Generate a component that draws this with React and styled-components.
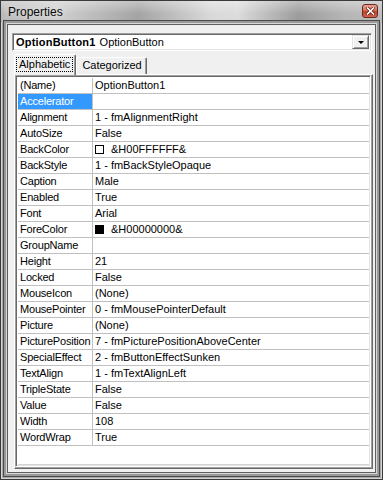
import React from "react";
import styled, { createGlobalStyle } from "styled-components";

const GlobalStyle = createGlobalStyle`
  html, body {
    margin: 0;
    padding: 0;
    background: #ffffff;
  }
  body {
    font-family: "Liberation Sans", Arial, sans-serif;
  }
`;

const Window = styled.div`
  box-sizing: border-box;
  width: 383px;
  height: 480px;
  display: flex;
  flex-direction: column;
  border: 1px solid #3a3a3a;
  background: #a9a9a9;
  box-shadow: inset 0 0 0 1px #d4d4d4;
`;

const TitleBar = styled.div`
  height: 22px;
  flex: none;
  display: flex;
  align-items: center;
  padding: 0 4px 0 7px;
  background:
    linear-gradient(180deg, rgba(255, 255, 255, 0.35) 0%, rgba(255, 255, 255, 0) 60%),
    linear-gradient(
      90deg,
      #b9b9b9 0%,
      #cfcfcf 15%,
      #a4a4a4 36%,
      #d9d9d9 55%,
      #dcdcdc 62%,
      #9c9c9c 78%,
      #b5b5b5 90%,
      #bdbdbd 100%
    );
`;

const Title = styled.span`
  flex: 1;
  font-size: 12px;
  color: #0a0a0a;
  text-shadow: 0 0 6px rgba(255, 255, 255, 0.8);
`;

const CloseButton = styled.div`
  width: 16px;
  height: 14px;
  box-sizing: border-box;
  border: 1px solid #6b2a20;
  border-radius: 3px;
  background: linear-gradient(180deg, #e9a294 0%, #d5705c 45%, #c0402a 55%, #d2644c 100%);
  display: flex;
  align-items: center;
  justify-content: center;
  margin-bottom: 2px;
`;

const Client = styled.div`
  flex: 1;
  display: flex;
  flex-direction: column;
  margin: 1px 6px 6px 6px;
  background: #f0f0f0;
  border: 1px solid #5f5f5f;
  box-shadow: 0 0 0 1px #d8d8d8, 0 0 0 3px #9a9a9a, 0 0 0 4px #4a4a4a;
`;

const Combo = styled.div`
  height: 18px;
  box-sizing: border-box;
  margin: 8px 3px 0 4px;
  display: flex;
  align-items: center;
  background: #ffffff;
  border-top: 1px solid #a0a0a0;
  border-left: 1px solid #a0a0a0;
  border-right: 1px solid #ffffff;
  border-bottom: 1px solid #ffffff;
  box-shadow: inset 1px 1px 0 #696969, inset -1px -1px 0 #e3e3e3;
  padding: 0 2px 0 3px;
  font-size: 11px;
  color: #000000;
`;

const ComboText = styled.span`
  flex: 1;
  white-space: nowrap;
  b {
    font-weight: bold;
    letter-spacing: 0.2px;
    margin-right: 4px;
  }
`;

const DropButton = styled.div`
  width: 17px;
  height: 14px;
  box-sizing: border-box;
  background: #f0f0f0;
  border-top: 1px solid #e3e3e3;
  border-left: 1px solid #e3e3e3;
  border-right: 1px solid #696969;
  border-bottom: 1px solid #696969;
  box-shadow: inset 1px 1px 0 #ffffff, inset -1px -1px 0 #a0a0a0;
  display: flex;
  align-items: center;
  justify-content: center;
`;

const Arrow = styled.div`
  width: 0;
  height: 0;
  border-left: 3px solid transparent;
  border-right: 3px solid transparent;
  border-top: 3px solid #000000;
  margin-top: 1px;
`;

const TabStrip = styled.div`
  height: 20px;
  margin: 3px 0 0 6px;
  display: flex;
  align-items: flex-end;
  position: relative;
  z-index: 1;
`;

const Tab = styled.div`
  box-sizing: border-box;
  height: ${(p) => (p.$active ? "21px" : "17px")};
  margin-bottom: ${(p) => (p.$active ? "-1px" : "0")};
  padding: ${(p) => (p.$active ? "2px 2px 0 1px" : "1px 4px 0 5px")};
  background: #f0f0f0;
  border-top: 1px solid #ffffff;
  border-left: 1px solid #ffffff;
  border-right: 1px solid #696969;
  box-shadow: inset -1px 0 0 #a0a0a0;
  border-radius: 2px 2px 0 0;
  font-size: 11px;
  color: #000000;
  white-space: nowrap;
`;

const FocusLabel = styled.span`
  display: inline-block;
  padding: 1px 3px 2px 3px;
  outline: 1px dotted #000000;
  outline-offset: -1px;
`;

const TabPanel = styled.div`
  flex: 1;
  display: flex;
  margin: 0 2px 3px 6px;
  border-top: 1px solid #ffffff;
  border-left: 1px solid #ffffff;
  border-right: 1px solid #696969;
  border-bottom: 1px solid #696969;
  box-shadow: inset -1px -1px 0 #a0a0a0;
`;

const Grid = styled.div`
  flex: 1;
  margin: 0 1px 1px 0;
  background: #ffffff;
  border-top: 1px solid #a0a0a0;
  border-left: 1px solid #a0a0a0;
  border-right: 1px solid #ffffff;
  border-bottom: 1px solid #ffffff;
  box-shadow: inset 1px 1px 0 #696969, inset -1px -1px 0 #e3e3e3;
  padding: 2px 1px 1px 2px;
  display: flex;
  flex-direction: column;
`;

const Rows = styled.div`
  flex: 1;
  border-bottom: 1px solid #d4d4d4;
`;

const Row = styled.div`
  display: grid;
  grid-template-columns: 75px 1fr;
  height: 16px;
  box-sizing: border-box;
  border-bottom: 1px solid #c0c0c0;
  font-size: 11px;
  line-height: 15px;
`;

const NameCell = styled.div`
  border-right: 1px solid #c0c0c0;
  padding-left: 2px;
  letter-spacing: -0.2px;
  white-space: nowrap;
  overflow: hidden;
  background: ${(p) => (p.$selected ? "#3399ff" : "transparent")};
  color: ${(p) => (p.$selected ? "#ffffff" : "#000000")};
`;

const ValueCell = styled.div`
  padding-left: 2px;
  display: flex;
  align-items: center;
  white-space: nowrap;
  overflow: hidden;
  color: #000000;
`;

const Swatch = styled.span`
  width: 9px;
  height: 9px;
  box-sizing: border-box;
  border: 1px solid #000000;
  background: ${(p) => p.$color};
  margin-right: 7px;
  flex: none;
`;

const props = [
  ["(Name)", "OptionButton1"],
  ["Accelerator", ""],
  ["Alignment", "1 - fmAlignmentRight"],
  ["AutoSize", "False"],
  ["BackColor", "&H00FFFFFF&", "#ffffff"],
  ["BackStyle", "1 - fmBackStyleOpaque"],
  ["Caption", "Male"],
  ["Enabled", "True"],
  ["Font", "Arial"],
  ["ForeColor", "&H00000000&", "#000000"],
  ["GroupName", ""],
  ["Height", "21"],
  ["Locked", "False"],
  ["MouseIcon", "(None)"],
  ["MousePointer", "0 - fmMousePointerDefault"],
  ["Picture", "(None)"],
  ["PicturePosition", "7 - fmPicturePositionAboveCenter"],
  ["SpecialEffect", "2 - fmButtonEffectSunken"],
  ["TextAlign", "1 - fmTextAlignLeft"],
  ["TripleState", "False"],
  ["Value", "False"],
  ["Width", "108"],
  ["WordWrap", "True"],
];

export default function App() {
  return (
    <Window>
      <GlobalStyle />
      <TitleBar>
        <Title>Properties</Title>
        <CloseButton>
          <svg width="9" height="8" viewBox="0 0 9 8">
            <path d="M1.5 1 L7.5 7 M7.5 1 L1.5 7" stroke="#5a1a10" strokeWidth="3" strokeLinecap="square" />
            <path d="M1.5 1 L7.5 7 M7.5 1 L1.5 7" stroke="#ffffff" strokeWidth="1.6" strokeLinecap="square" />
          </svg>
        </CloseButton>
      </TitleBar>
      <Client>
        <Combo>
          <ComboText>
            <b>OptionButton1</b>OptionButton
          </ComboText>
          <DropButton>
            <Arrow />
          </DropButton>
        </Combo>
        <TabStrip>
          <Tab $active>
            <FocusLabel>Alphabetic</FocusLabel>
          </Tab>
          <Tab>Categorized</Tab>
        </TabStrip>
        <TabPanel>
          <Grid>
            <Rows>
              {props.map(([name, value, color]) => (
                <Row key={name}>
                  <NameCell $selected={name === "Accelerator"}>{name}</NameCell>
                  <ValueCell>
                    {color && <Swatch $color={color} />}
                    {value}
                  </ValueCell>
                </Row>
              ))}
            </Rows>
          </Grid>
        </TabPanel>
      </Client>
    </Window>
  );
}
